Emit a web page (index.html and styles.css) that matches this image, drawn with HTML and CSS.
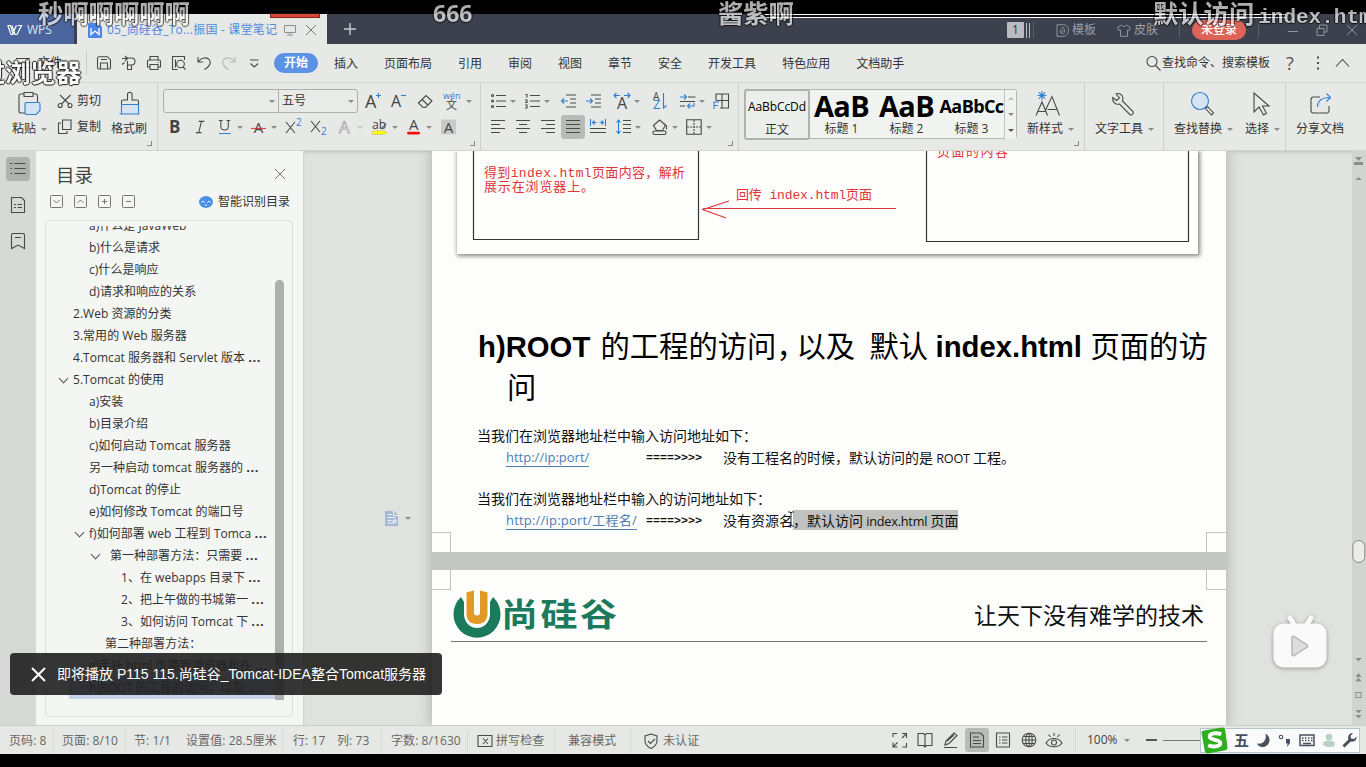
FILE: index.html
```html
<!DOCTYPE html>
<html lang="zh-CN">
<head>
<meta charset="utf-8">
<title>课堂笔记 - WPS</title>
<link rel="stylesheet" href="styles.css">
</head>
<body>
<div class="screen">
  <header class="titlebar">
    <div class="wps"><svg width="16" height="12" viewBox="0 0 16 12"><path d="M.5 1.500h3L6 9.500 9 2h1.500M5 1.500L8 10.500h2L14.500 1.500H11M.8 1.500L4 10.500h2L7.500 6" stroke="#fff" fill="none" stroke-width="1.200"/></svg><span>WPS</span></div>
    <div class="tab">
      <svg width="14" height="15" viewBox="0 0 14 15"><path d="M1 0h9l4 4v10a1 1 0 0 1-1 1H1a1 1 0 0 1-1-1V1a1 1 0 0 1 1-1z" fill="#4a86e8"/><path d="M3 5v6.500L7 8l4 3.500V5" stroke="#fff" fill="none" stroke-width="1.300"/></svg>
      <span class="tab-name">05_尚硅谷_To...振国 - 课堂笔记</span>
      <svg class="tab-mon" width="12" height="12" viewBox="0 0 12 12"><path d="M.5 1.500h11v7H.5zM6 8.500v2M3 11h6" stroke="#8b9095" fill="none"/></svg>
      <svg class="tab-x" width="12" height="12" viewBox="0 0 12 12"><path d="M1 1l10 10M11 1L1 11" stroke="#777" fill="none"/></svg>
    </div>
    <svg class="plus" width="12" height="12" viewBox="0 0 12 12"><path d="M6 0v12M0 6h12" stroke="#c8cbd2" stroke-width="1.400"/></svg>
    <div class="tb-right">
      <span class="badge">1</span>
      <i class="bars"></i>
      <i class="tsep"></i>
      <svg width="13" height="13" viewBox="0 0 13 13"><path d="M1 .7h6.500a5 5 0 0 1 5 5v1a5.500 5.500 0 0 1-5.500 5.600H1zM6.600 3c2 2 2.400 3.300 2 5-.5 2-3.700 2-4.200 0-.4-2 1.400-2.500 2.200-5zM5 9l2.500-3" stroke="#8f939d" fill="none"/></svg>
      <span>模板</span>
      <svg width="14" height="13" viewBox="0 0 14 13"><path d="M4.500 1L.7 3.500l1 3 1.800-.5v6.300h7V6l1.800.5 1-3L9.500 1C8.500 3 5.500 3 4.500 1z" stroke="#8f939d" fill="none"/></svg>
      <span>皮肤</span>
      <i class="tsep"></i>
      <b class="login">未登录</b>
      <i class="tsep"></i>
      <svg width="12" height="12" viewBox="0 0 12 12"><path d="M1 7.500h10" stroke="#8f939d"/></svg>
      <svg width="12" height="12" viewBox="0 0 12 12"><path d="M1 4.500h7v7H1zM3.500 4V1H11v7H8.500" stroke="#8f939d" fill="none"/></svg>
      <svg width="12" height="12" viewBox="0 0 12 12"><path d="M1 1l10 10M11 1L1 11" stroke="#8f939d"/></svg>
    </div>
  </header>

  <nav class="menu">
    <div class="file"><svg width="14" height="12" viewBox="0 0 14 12"><path d="M0 1.500h14M0 6h14M0 10.500h14" stroke="#444"/></svg><span>文件</span></div>
    <div class="quick ln">
      <svg viewBox="0 0 16 16"><path d="M1.500 3v9.500a1.500 1.500 0 0 0 1.500 1.500h10a1.500 1.500 0 0 0 1.500-1.500V5L11.500 1.700H3A1.500 1.500 0 0 0 1.500 3zM4.500 14V8h7v6M5 4.500h6"/></svg>
      <svg viewBox="0 0 16 16"><path d="M1 3.500h5M4 1l2.500 2.500L4 6M6 3h4.500a3.500 3.500 0 0 1 0 7H7M6.500 6v8.500h4V10M1 9.500l2.500-2"/></svg>
      <svg viewBox="0 0 16 16"><path d="M4 5V1.500h8V5M4 12H1.500V6.500a1.500 1.500 0 0 1 1.500-1.500h10a1.500 1.500 0 0 1 1.500 1.500V12H12M4 9.500h8v5H4zM11.500 7.500h1"/></svg>
      <svg viewBox="0 0 16 16"><path d="M6.500 14.500h-5v-13h12V5M4.500 4.500v8M14.500 14.500l-2.500-2.500"/><circle cx="9.500" cy="9" r="3.800"/></svg>
      <svg viewBox="0 0 16 16"><path d="M2 2v5h5M2.500 6.500C5 2.500 11 1.500 13.500 5c2 3.500-.5 7-5 9.500"/></svg>
      <svg class="dim" viewBox="0 0 16 16"><path d="M14 2v5H9M13.500 6.500C11 2.500 5 1.500 2.500 5c-2 3.500.5 7 5 9.500"/></svg>
      <svg viewBox="0 0 16 16"><path d="M4 5h8.500M4.500 8.500L8.200 12l3.800-3.500"/></svg>
    </div>
    <div class="tabs"><b>开始</b><span>插入</span><span>页面布局</span><span>引用</span><span>审阅</span><span>视图</span><span>章节</span><span>安全</span><span>开发工具</span><span>特色应用</span><span>文档助手</span></div>
    <div class="search ln">
      <svg viewBox="0 0 16 16"><circle cx="6" cy="6.500" r="5"/><path d="M9.500 10.500l5 5"/></svg>
      <span>查找命令、搜索模板</span>
      <em>?</em>
      <svg class="dots" viewBox="0 0 16 16"><path d="M7 2.500h2M7 8h2M7 13.500h2" stroke-width="2"/></svg>
      <svg viewBox="0 0 16 16"><path d="M2 11.500l6.500-7 6.500 7"/></svg>
    </div>
  </nav>

  <section class="ribbon ln">
    <div class="grp clip">
      <div class="big"><svg width="26" height="26" viewBox="0 0 26 26"><path d="M8 3H5a2 2 0 0 0-2 2v15a2 2 0 0 0 2 2h4M17 3h2.500a2 2 0 0 1 2 2v6M8 1.500h9v4H8z"/><path class="bl tint" d="M9 13a1.500 1.500 0 0 1 1.500-1.500h12a1.500 1.500 0 0 1 1.500 1.500v6.500L20 23.500h-9.500A1.500 1.500 0 0 1 9 22z"/></svg><span>粘贴<i class="car"></i></span></div>
      <div class="pair">
        <div><svg viewBox="0 0 16 16"><path d="M3 2l9 9M13.500 2l-9 9"/><circle cx="3.200" cy="12.500" r="2"/><circle cx="13" cy="12.500" r="2"/></svg>剪切</div>
        <div><svg viewBox="0 0 16 16"><path d="M5.500 1h8.500v9.500H5.500zM4 4H1.500v10.500H10V12"/></svg>复制</div>
      </div>
      <div class="big"><svg width="26" height="26" viewBox="0 0 26 26"><path d="M4.500 13v-2.500a1.500 1.500 0 0 1 1.500-1.500h4.500V3.500a2.300 2.300 0 0 1 4.600 0V9H20a1.500 1.500 0 0 1 1.500 1.500V13"/><path class="bl tint" d="M4.500 13.500h17v9.500h-17zM2.500 23h20"/></svg><span>格式刷</span></div>
      <i class="corner"></i>
    </div>

    <div class="grp font">
      <div class="row r1">
        <div class="combo"><i class="car"></i></div>
        <div class="combo sz">五号<i class="car"></i></div>
        <svg viewBox="0 0 16 16"><text x="0" y="15" class="t17">A</text><path class="bl" d="M11 2.500h5M13.500 0v5"/></svg>
        <svg viewBox="0 0 16 16"><text x="0" y="14" class="t15">A</text><path class="bl" d="M10 2.500h5"/></svg>
        <svg viewBox="0 0 16 16"><path d="M1.500 10l7.500-7.500L15 8l-6.500 6.500H6zM5 6.500l6 5.500"/></svg>
        <svg class="wide" viewBox="0 0 20 18"><text x="0" y="7" class="t9 fb">wén</text><text x="3" y="17" class="t11">文</text></svg>
        <i class="car"></i>
      </div>
      <div class="row r2">
        <svg viewBox="0 0 16 16"><text x="0" y="14" class="t17 bd">B</text></svg>
        <svg viewBox="0 0 16 16"><path d="M5 2h6M2 14h6M8 2L5 14"/></svg>
        <svg viewBox="0 0 16 16"><path d="M3 1v6.500c0 5 8 5 8 0V1M1 1h4M9 1h4"/><path class="bl" d="M1 15h12.500"/></svg>
        <i class="car"></i>
        <svg viewBox="0 0 16 16"><text x="3" y="14" class="t15">A</text><path class="rd" d="M0 9.500h16"/></svg>
        <i class="car"></i>
        <svg class="x2" viewBox="0 0 17 16"><path d="M1 3l9 11M10 3L1 14"/><text x="11" y="7" class="t10 fb">2</text></svg>
        <svg class="x2" viewBox="0 0 17 16"><path d="M1 2l9 11M10 2L1 13"/><text x="11" y="16" class="t10 fb">2</text></svg>
        <svg viewBox="0 0 16 16"><text x="1" y="14.500" class="t18 ol">A</text></svg>
        <i class="car pale"></i>
        <svg viewBox="0 0 16 16"><text x="0" y="10.500" class="t12">ab</text><path d="M10 10l5-5.500"/><rect x="0" y="12" width="15" height="4" rx="2" fill="#ff0" stroke="#aaa" stroke-width=".5"/></svg>
        <i class="car"></i>
        <svg viewBox="0 0 16 16"><text x="2" y="11" class="t15">A</text><rect x="0" y="13" width="14" height="3" rx="1.500" fill="#e11" stroke="none"/></svg>
        <i class="car"></i>
        <svg viewBox="0 0 16 16"><rect width="16" height="16" fill="#c9cbc9" stroke="none"/><text x="3" y="14" class="t15">A</text></svg>
      </div>
      <i class="corner"></i>
    </div>

    <div class="grp para">
      <div class="row p1">
        <svg viewBox="0 0 16 16"><path d="M5 2.500h10M5 8h10M5 13.500h10"/><circle cx="1.500" cy="2.500" r="1"/><circle cx="1.500" cy="8" r="1"/><circle cx="1.500" cy="13.500" r="1"/></svg>
        <i class="car"></i>
        <svg viewBox="0 0 16 16"><path d="M5 2.500h10M5 8h10M5 13.500h10M.5 1.500h1.500v3M0 7h2v2.500H0M0 12h2v3H0"/></svg>
        <i class="car"></i>
        <svg viewBox="0 0 16 16"><path d="M5 2h10M9 6h6M9 10h6M5 14h10"/><path class="bl" d="M7 8H.5M3 5.500L.5 8 3 10.500"/></svg>
        <svg viewBox="0 0 16 16"><path d="M5 2h10M9 6h6M9 10h6M5 14h10"/><path class="bl" d="M0 8h6.500M4 5.500L6.500 8 4 10.500"/></svg>
        <svg viewBox="0 0 16 16"><text x="3" y="16" class="t15">A</text><path class="bl" d="M0 2.500h6M2.500 0L0 2.500 2.500 5M10 2.500h6M13.500 0L16 2.500 13.500 5"/></svg>
        <i class="car"></i>
        <svg viewBox="0 0 16 16"><text x="1" y="7" class="t10">A</text><text x="1" y="16" class="t12 fb">Z</text><path class="bl" d="M11.500 0v15l3-2.500"/></svg>
        <svg viewBox="0 0 16 16"><path d="M8 4h7.500M0 8.500h15M0 13h5"/><path class="bl" d="M0 4h6M4 1.500L6.500 4 4 6.500M14 10v3H8M10 10.500L7.500 13l2.500 2.500"/></svg>
        <i class="car"></i>
        <svg viewBox="0 0 16 16"><path d="M3 7V1h12.500v14H7M3 7.500h12.500M9 1v14"/><path class="bl" d="M1 16V9h5M1 12.500h4"/></svg>
      </div>
      <div class="row p2">
        <svg viewBox="0 0 16 16"><path d="M0 1.500h14M0 5.500h9M0 9.500h14M0 13.500h9"/></svg>
        <svg viewBox="0 0 16 16"><path d="M0 1.500h14M3 5.500h8M0 9.500h14M3 13.500h8"/></svg>
        <svg viewBox="0 0 16 16"><path d="M0 1.500h14M5 5.500h9M0 9.500h14M5 13.500h9"/></svg>
        <div class="on"><svg viewBox="0 0 16 16"><path d="M1 1.500h14M1 5.500h14M1 9.500h14M1 13.500h14"/></svg></div>
        <svg viewBox="0 0 16 16"><path d="M0 9.500h16M0 13.500h16"/><path class="bl" d="M.5 0v7M15.500 0v7M2.500 3.500h4M4.500 1.500l-2 2 2 2M9.500 3.500h4M11.500 1.500l2 2-2 2"/></svg>
        <svg viewBox="0 0 16 16"><path d="M7 1.500h8M7 5.500h8M7 9.500h8M7 13.500h8"/><path class="bl" d="M2.500 1v13.500M.5 3.500l2-2.500 2 2.500M.5 12l2 2.500 2-2.500"/></svg>
        <i class="car"></i>
        <svg viewBox="0 0 16 16"><path d="M1.500 6.500l6-5.500 6 5-3 5.500h-6zM12 5l2.500 2v3.500"/><rect x="1" y="12" width="13" height="3.500" rx="1.500"/></svg>
        <i class="car"></i>
        <svg viewBox="0 0 16 16"><path d="M.7.700h14.500v14.500H.7z"/><path d="M8 1v14M1 8h14" stroke-dasharray="2 1"/></svg>
        <i class="car"></i>
      </div>
      <i class="corner"></i>
    </div>

    <div class="grp styles">
      <div class="gallery">
        <div class="st sel"><span class="s0">AaBbCcDd</span><span>正文</span></div>
        <div class="st"><span class="s1">AaB</span><span>标题 1</span></div>
        <div class="st"><span class="s1">AaB</span><span>标题 2</span></div>
        <div class="st"><span class="s3">AaBbCc</span><span>标题 3</span></div>
        <div class="gs"><i class="car up"></i><i class="car"></i><i class="car bar"></i></div>
      </div>
      <div class="big ns"><svg width="26" height="26" viewBox="0 0 26 26"><path d="M2 24.500L8 11l5.500 13.500M4 20.500h7.500M11.500 19L18 5.500l7.500 19M13.500 18.500h9.500"/><path class="bl" d="M8 0v9M3.500 4.500h9M4.800 1.300l6.400 6.400M11.200 1.300L4.800 7.700"/></svg><span>新样式<i class="car"></i></span></div>
      <i class="corner"></i>
    </div>
    <div class="grp tools"><div class="big"><svg width="26" height="26" viewBox="0 0 26 26"><path d="M6 3c3-1.500 7 .5 7 4.500l-.5 2.500L23 20.500a2.300 2.300 0 0 1-3 3.200L9.500 13C5.500 14 2 11 2.700 6.500L6.500 9.500 9.500 7z"/></svg><span>文字工具<i class="car"></i></span></div></div>
    <div class="grp find">
      <div class="big"><svg width="26" height="26" viewBox="0 0 26 26"><path d="M16.500 17.500l2-2 6 6.500-2 2z"/><circle class="bl tint" cx="11" cy="10" r="8.500"/></svg><span>查找替换<i class="car"></i></span></div>
      <div class="big sl"><svg width="26" height="26" viewBox="0 0 26 26"><path d="M6 2v19l5-5 4.500 8 3-1.800-4-7.200h6.500z"/></svg><span>选择<i class="car"></i></span></div>
    </div>
    <div class="grp share"><div class="big"><svg width="26" height="26" viewBox="0 0 26 26"><path d="M12 6H5.500A2.500 2.500 0 0 0 3 8.500v11A2.500 2.500 0 0 0 5.500 22h13a2.500 2.500 0 0 0 2.500-2.500V15"/><path class="bl" d="M9.500 16c0-6 4-9.500 12.500-9.500M18.500 2.500l4 4-4 4"/></svg><span>分享文档</span></div></div>
  </section>

  <main class="work">
    <aside class="rail ln">
      <div class="rb on"><svg viewBox="0 0 16 16"><path d="M4.500 2.500h11M4.500 7.500h11M4.500 12.500h11M0 2.500h2.500M.5 7.500H2M.5 12.500H2"/></svg></div>
      <div class="rb"><svg viewBox="0 0 16 16"><path d="M1.500.5h10l3 3v12h-13zM4 7.500h2M7.500 7.500H12M4 10.500h2M7.500 10.500H12"/></svg></div>
      <div class="rb"><svg viewBox="0 0 16 16"><path d="M1.500 2A1.500 1.500 0 0 1 3 .5h10A1.500 1.500 0 0 1 14.500 2v13.500L8 12l-6.500 3.500zM5 4.500h6"/></svg></div>
    </aside>
    <aside class="nav">
      <div class="nhead"><h2>目录</h2><svg width="12" height="12" viewBox="0 0 12 12"><path d="M1 1l10 10M11 1L1 11" stroke="#777"/></svg></div>
      <div class="ntools ln">
        <svg viewBox="0 0 14 14"><rect x=".5" y=".5" width="12" height="12" rx="1"/><path d="M3.500 5l3 3 3-3"/></svg>
        <svg viewBox="0 0 14 14"><rect x=".5" y=".5" width="12" height="12" rx="1"/><path d="M3.500 8l3-3 3 3"/></svg>
        <svg viewBox="0 0 14 14"><rect x=".5" y=".5" width="12" height="12" rx="1"/><path d="M4 6.500h5M6.500 4v5"/></svg>
        <svg viewBox="0 0 14 14"><rect x=".5" y=".5" width="12" height="12" rx="1"/><path d="M4 6.500h5"/></svg>
        <span class="smart"><svg viewBox="0 0 14 14"><ellipse cx="7" cy="7" rx="7" ry="6" fill="#4a90e8" stroke="none"/><path d="M2.500 7.500L4 6l1.500 1.500M8.500 7.500L10 6l1.500 1.500M6 10h2" stroke="#fff"/></svg>智能识别目录</span>
      </div>
      <div class="nbox">
        <ul class="toc">
          <li class="l2">a)什么是 JavaWeb</li>
          <li class="l2">b)什么是请求</li>
          <li class="l2">c)什么是响应</li>
          <li class="l2">d)请求和响应的关系</li>
          <li class="l1">2.Web 资源的分类</li>
          <li class="l1">3.常用的 Web 服务器</li>
          <li class="l1">4.Tomcat 服务器和 Servlet 版本 <b>...</b></li>
          <li class="l1 op">5.Tomcat 的使用</li>
          <li class="l2">a)安装</li>
          <li class="l2">b)目录介绍</li>
          <li class="l2">c)如何启动 Tomcat 服务器</li>
          <li class="l2">另一种启动 tomcat 服务器的 <b>...</b></li>
          <li class="l2">d)Tomcat 的停止</li>
          <li class="l2">e)如何修改 Tomcat 的端口号</li>
          <li class="l2 op">f)如何部署 web 工程到 Tomca <b>...</b></li>
          <li class="l3 op">第一种部署方法：只需要 <b>...</b></li>
          <li class="l4">1、在 webapps 目录下 <b>...</b></li>
          <li class="l4">2、把上午做的书城第一 <b>...</b></li>
          <li class="l4">3、如何访问 Tomcat 下 <b>...</b></li>
          <li class="l3b">第二种部署方法：</li>
          <li class="l2">g)手托 html 页面到浏览器和在 <b>...</b></li>
          <li class="l2 cur">h)ROOT 的工程的访问，以及&nbsp; <b>...</b></li>
        </ul>
        <i class="nthumb"></i>
      </div>
    </aside>

    <div class="canvas">
      <div class="margin-tool"><svg width="14" height="16" viewBox="0 0 14 16"><path d="M0 0h9l4 4v11H0z" fill="#a5b8d6"/><path d="M2.500 3.500h4M2.500 6.500h8M2.500 9.500h4M2.500 12h8M8.500 0v4.500H13M8 9v2h3V9z" stroke="#f0f3f8" fill="none"/></svg><i class="car"></i></div>
      <div class="pages">
        <article class="page one">
          <svg class="diagram" width="741" height="103" viewBox="0 0 741 103">
            <path d="M16.500-2v90.500h225V-2M469.500-2v92.500h262V-2" stroke="#333" fill="none" stroke-width="1.200"/>
            <path d="M439 57.500H246M272 50l-26 8.500L269 67" stroke="#d8383d" fill="none" stroke-width="1.200"/>
            <g class="kai">
              <text x="27" y="26" textLength="201">得到index.html页面内容，解析</text>
              <text x="27" y="40" textLength="110">展示在浏览器上。</text>
              <text x="279" y="48" textLength="136" xml:space="preserve">回传 index.html页面</text>
              <text x="480" y="5" textLength="71">页面的内容</text>
            </g>
          </svg>
          <h1><b>h)ROOT</b><span>的工程的访问</span><span>，</span><span>以及</span><span>默认</span><b>index.html</b><span>页面的访</span><span class="wrap">问</span></h1>
          <div class="para-txt">
            <p>当我们在浏览器地址栏中输入访问地址如下：</p>
            <p class="url"><a>http://ip:port/</a><code>====&gt;&gt;&gt;&gt;</code><span>没有工程名的时候，默认访问的是 <i>ROOT</i> 工程。</span></p>
            <p class="second">当我们在浏览器地址栏中输入的访问地址如下：</p>
            <p class="url"><a>http://ip:port/工程名/</a><code>====&gt;&gt;&gt;&gt;</code><span>没有资源名<mark>，默认访问 <i>index.html</i> 页面</mark></span></p>
          </div>
          <div class="crop bottom"><i></i><i></i></div>
        </article>
        <article class="page two">
          <div class="crop top"><i></i><i></i></div>
          <div class="lhead">
            <svg width="48" height="50" viewBox="0 0 48 50"><path d="M8 8a23.500 23.500 0 1 0 32 0l-3 5v12a13 14 0 0 1-26 0V13z" fill="#1b7a5c"/><path d="M13.500 3.500L21 1.500v22q0 3 3 3t3-3v-22l7.500 2V24q0 11-10.500 11T13.500 24z" fill="#e39a24"/></svg>
            <strong>尚硅谷</strong>
            <span>让天下没有难学的技术</span>
          </div>
        </article>
      </div>
      <svg class="tv" width="60" height="60" viewBox="0 0 60 60"><path d="M20 6l5 8M41 6l-5 8" stroke="#fafafa" stroke-width="5" stroke-linecap="round"/><rect x="3.500" y="11.500" width="53" height="44" rx="10" fill="#fafafa"/><path d="M22 25.500v17a1.500 1.500 0 0 0 2 1.200l13-8.500a1.500 1.500 0 0 0 0-2.400L24 24.300a1.500 1.500 0 0 0-2 1.200z" fill="#dcdedc" stroke="#b5b7b5" stroke-width="1.500"/></svg>
      <div class="vbar"><svg width="17" height="574" viewBox="0 0 17 574"><g fill="#8c8e8c"><path d="M3 6h7l-3.500 4zM2 11h9v3H2z"/><path d="M3.500 29h6l-3-3zM3.500 507h6l-3 3.500zM3.500 526h6l-3-4zM3.500 530.500h6l-3-4zM3.500 559h6l-3 3.500zM3.500 564h6l-3 3.500z"/></g><rect x="4" y="541.500" width="5" height="5" fill="none" stroke="#8c8e8c"/><rect x=".8" y="389.500" width="12" height="22" rx="6" fill="#ecedeb" stroke="#888"/></svg></div>
    </div>
  </main>

  <footer class="status ln">
    <div class="sleft"><span>页码: 8</span><i></i><span>页面: 8/10</span><i></i><span>节: 1/1</span><span>设置值: 28.5厘米</span><i></i><span>行: 17</span><span>列: 73</span><i></i><span>字数: 8/1630</span><i></i><span class="ic"><svg viewBox="0 0 16 16"><path d="M8 2.500H1v11h7M8 2.500h7v11H8M6 5.500l5 5.500M11 5.500L6 11"/></svg>拼写检查</span><i></i><span>兼容模式</span><i></i><span class="ic"><svg viewBox="0 0 16 16"><path d="M7 1l6 2v5c0 4-3 6-6 7.500C4 14 1 12 1 8V3zM4 8l2.500 2.500L11 6"/></svg>未认证</span></div>
    <div class="views">
      <svg viewBox="0 0 16 16"><path d="M1 5V1.500h4M10 1.500h4.500V6M1 10.500V15h4.500M10.500 15h4v-4M14.500 1.500L10 6M1 15l4.500-4.500"/></svg>
      <svg viewBox="0 0 16 16"><path d="M8 3L6.500 1.500H1v12h5.500L8 15l1.500-1.500H15v-12H9.500zM8 3v12"/></svg>
      <svg viewBox="0 0 16 16"><path d="M2 13l1-4 8-8 3 2.500-8 8zM1 15.500h13M4 9l7-6"/></svg>
      <div class="on"><svg viewBox="0 0 16 16"><path d="M1.500 1h10l3 3v11h-13zM4 5h6M4 8.500h8M4 11.500h8"/></svg></div>
      <svg viewBox="0 0 16 16"><path d="M1.500 1h13v14h-13zM4 5h1.500M7 5h5.500M4 8h1.500M7 8h5.500M4 11h1.500M7 11h5.500"/></svg>
      <svg viewBox="0 0 16 16"><circle cx="8" cy="8" r="6.800"/><ellipse cx="8" cy="8" rx="3.200" ry="6.800"/><path d="M1 8h14M2.500 4.500h11M2.500 11.500h11M8 1v14"/></svg>
      <svg viewBox="0 0 16 16"><path d="M0 11c3.500-6 12.500-6 16 0-3.500 5-12.500 5-16 0zM8 1v3M2.500 2.500l2 2.500M13.500 2.500l-2 2.500"/><circle cx="8" cy="10.500" r="2.500"/></svg>
      <i class="ssep"></i><span>100%</span><i class="car"></i><i class="minus"></i><i class="track"></i>
    </div>
    <div class="ime">
      <svg class="sg" width="28" height="28" viewBox="0 0 28 28"><path d="M3 3.500L22 .5q2.500 0 3 2L27.500 21q0 2.500-2 3.200L7 27.500q-2 0-3-2L.5 6q0-2 2.500-2.500z" fill="#2fae1e"/><path d="M21 7.500c-5-2-12-1-12 2.500 0 4 11 2.500 11 6.500 0 4-8 4.500-12.500 2.500" stroke="#fff" stroke-width="4" fill="none"/></svg>
      <b>五</b>
      <svg viewBox="0 0 16 16"><path d="M9.500 1.500C17 6 13 15 6.500 15 3.500 15 1.500 13 1 11.500 7 12.500 11 8 9.500 1.500z" class="sol"/></svg>
      <svg viewBox="0 0 16 16"><circle cx="4" cy="5" r="1.700"/><path d="M9 7h4v4l-2.500 3.500-.5-.5.8-2.500H9z" class="sol"/></svg>
      <svg viewBox="0 0 16 16"><path d="M1 3h14v10.500H1zM3 6h1.500M6 6h1.500M9 6h1.500M12 6h1.500M3 8.500h1.500M6 8.500h1.500M9 8.500h1.500M12 8.500h1.500M4 11.500h8" stroke-width="1.500"/></svg>
      <svg viewBox="0 0 16 16"><circle cx="8" cy="5" r="3.300" fill="#b9cfc8" stroke="none"/><path d="M2 12q0-3.500 6-3.500t6 3.500-6 3-6-3z" fill="#b9cfc8" stroke="none"/></svg>
      <svg viewBox="0 0 16 16"><path d="M1.500 14.500L8 8" stroke-width="3"/><path d="M14.500 4.500L12 7l-3-.5L8.500 4 11 1C7 1 5.500 4 6.500 7.500 8 11 15 10.500 14.500 4.500z" class="sol"/></svg>
    </div>
  </footer>

  <i class="redmark"></i>
  <i class="wline"></i>
  <svg class="ibeam" width="8" height="16" viewBox="0 0 8 16"><path d="M1 1h2l1 1 1-1h2M4 2v12M1 15h2l1-1 1 1h2" stroke="#222" fill="none"/></svg>
  <div class="toast"><svg width="15" height="15" viewBox="0 0 15 15"><path d="M1 1l13 13M14 1L1 14" stroke="#fff" stroke-width="2"/></svg><span>即将播放 P115 115.尚硅谷_Tomcat-IDEA整合Tomcat服务器</span></div>
  <div class="dm d1">秒啊啊啊啊啊</div>
  <div class="dm d2">666</div>
  <div class="dm d3">酱紫啊</div>
  <div class="dm d4">默认访问<span>index.html</span></div>
  <div class="dm d5">过浏览器</div>
</div>
</body>
</html>
```
FILE: styles.css
```css
* { box-sizing: border-box; margin: 0; padding: 0; }
body { background: #000; font: 12px/16px "Open Sans", "Noto Sans CJK SC", sans-serif; color: #333; overflow: hidden; }
i { font-style: normal; }
svg { display: block; flex: none; overflow: visible; }
.screen { position: relative; width: 1366px; height: 767px; padding-top: 14px; display: flex; flex-direction: column; overflow: hidden; white-space: nowrap; }
.ln svg { width: 16px; height: 16px; fill: none; stroke: #484a4a; stroke-width: 1.1; }
.ln svg text { fill: #444; stroke: none; }
.ln svg .bl { stroke: #2f7fd0; }
.ln svg .tint { fill: #d5e3f3; }
.ln svg .rd { stroke: #d33; }
.ln svg text.fb { fill: #2f7fd0; }
.t9 { font-size: 9px; } .t10 { font-size: 10px; } .t11 { font-size: 11px; } .t12 { font-size: 13px; }
.t15 { font-size: 16px; } .t17 { font-size: 18px; } .t18 { font-size: 18px; }
.bd { font-weight: 700; }
.ln svg text.ol { fill: #eee; stroke: #aaa; stroke-width: .8; }
.car { display: block; width: 0; height: 0; border: 3px solid transparent; border-top: 3px solid #8a8c8a; border-bottom: 0; }
.car.pale { border-top-color: #c4c6c4; }

/* title bar */
.titlebar { height: 30px; background: #3d414d; display: flex; align-items: center; color: #9a9ea8; }
.wps { width: 74px; height: 30px; background: #4a659d; color: #dfe5ef; display: flex; align-items: center; padding: 1px 0 0 7px; gap: 4px; }
.tab { width: 250px; height: 30px; margin-left: 3px; background: #e7e9e6; display: flex; align-items: center; padding: 2px 0 0 11px; color: #5088e0; }
.tab-name { width: 182px; padding-left: 5px; letter-spacing: .22px; }
.tab-mon { margin-left: 0; }
.tab-x { margin-left: 9px; }
.plus { margin-left: 17px; }
.tb-right { margin-left: auto; padding-top: 2px; display: grid; align-items: center; grid-template-columns: 19px 7px 23px 16px 45px 17px 45px 13px 66px 29px 29px 30px 20px; }
.badge { background: #b9bcc1; color: #333; width: 17px; height: 16px; text-align: center; border-radius: 1px; }
.bars { width: 4px; height: 15px; border: solid #b9bcc1; border-width: 0 1px; }
.tsep { width: 1px; height: 16px; background: #5a5e69; }
.login { width: 54px; height: 20px; border-radius: 10px; background: #dd6257; color: #fff; font-weight: 500; text-align: center; line-height: 19px; }

/* menu */
.menu { height: 39px; background: #e7e9e6; border-bottom: 1px solid #d6d8d5; display: flex; align-items: center; }
.file { width: 87px; height: 24px; border-right: 1px solid #c9cbc8; display: flex; align-items: center; padding-left: 16px; gap: 8px; }
.quick { display: grid; grid-template-columns: repeat(7, 25px); padding-left: 9px; width: 187px; }
.ln .dim { stroke: #b5b7b5; }
.tabs { display: flex; gap: 26px; align-items: center; }
.tabs span { padding-top: 1px; }
.tabs b { width: 44px; height: 20px; border-radius: 10px; background: #5b92e5; color: #fff; text-align: center; line-height: 20px; margin-right: -10px; font-weight: 600; }
.search { margin-left: auto; display: grid; grid-template-columns: 16px 124px 24px 24px 32px; align-items: center; }
.search em { font: 18px/20px "Open Sans", sans-serif; color: #555; }

/* ribbon */
.ribbon { height: 68px; background: #e7e9e6; border-bottom: 1px solid #d2d4d1; display: flex; }
.grp { position: relative; border-right: 1px solid #cfd1ce; padding-top: 6px; }
.corner { position: absolute; right: 5px; bottom: 4px; width: 5px; height: 5px; border: solid #888; border-width: 0 1px 1px 0; }
.big { display: flex; flex-direction: column; }
.ln .big > svg { width: 26px; height: 26px; margin: 2px 0 4px 15px; }
.big > span { display: flex; align-items: center; gap: 5px; }
.row { display: grid; height: 24px; align-items: center; margin-bottom: 2px; }
.clip { width: 158px; display: flex; padding-left: 12px; }
.clip .big:first-child { width: 45px; }
.ln .clip .big:first-child > svg, .ribbon .clip .big:first-child > svg { margin-left: 4px; }
.ribbon .clip .big:nth-child(3) > svg { margin-left: 6px; }
.pair { width: 54px; }
.pair div { display: flex; align-items: center; height: 24px; margin-bottom: 2px; gap: 4px; }
.font { width: 323px; padding-left: 5px; }
.r1 { grid-template-columns: 115px 87px 26px 26px 26px 23px 8px; }
.combo { height: 24px; width: 116px; border: 1px solid #adafad; border-radius: 3px 0 0 3px; display: flex; align-items: center; justify-content: flex-end; padding: 0 3px; background: #e9ebe8; }
.combo.sz { width: 80px; border-radius: 0 3px 3px 0; justify-content: space-between; }
.ln .r1 .wide { width: 20px; height: 18px; }
.r2 { padding-left: 6px; grid-template-columns: 25px 24px 19px 14px 20px 14px 25px 28px 19px 15px 20px 15px 19px 15px 16px; }
.ln .r2 svg { width: 15px; }
.ln .r2 .x2 { width: 17px; }
.para { width: 258px; padding-left: 10px; }
.p1 { grid-template-columns: 19px 15px 19px 17px 25px 28px 20px 18px 28px 19px 14px 16px; }
.p2 { grid-template-columns: 25px 25px 20px 29px 26px 19px 17px 20px 14px 20px 8px; }
.p2 .on { width: 24px; height: 24px; background: #b9bbb9; border-radius: 3px; display: grid; place-items: center; }
.styles { width: 346px; padding-left: 5px; display: flex; }
.gallery { width: 273px; height: 50px; border: 1px solid #b5b7b5; border-radius: 3px; background: #f1f3f0; display: grid; grid-template-columns: 64px 65px 65px 65px 12px; }
.st { display: flex; flex-direction: column; align-items: center; }
.st span:first-child { height: 31px; line-height: 32px; color: #000; }
.st.sel { border: 2px solid #b0b2b0; margin: -1px; border-radius: 3px; background: #eceeeb; }
.s0 { font-size: 12px; letter-spacing: -.1px; }
.s1 { font: 700 29px/34px "Open Sans", sans-serif; letter-spacing: -.6px; }
.s3 { font: 700 18px/32px "Open Sans", sans-serif; letter-spacing: -.6px; }
.gs { border-left: 1px solid #c2c4c1; display: grid; place-items: center; background: #f1f3f0; }
.gs .up { transform: rotate(180deg); opacity: .5; }
.gs .bar { border-top-color: #555; box-shadow: 0 -5px 0 -3px #555; }
.ns { margin-left: 10px; }
.ribbon .ns > svg { margin-left: 7px; }
.tools { width: 79px; padding-left: 10px; }
.find { width: 122px; padding-left: 10px; display: flex; }
.sl { margin-left: 12px; }
.ribbon .sl > svg { margin-left: 3px; }
.share { border: 0; padding-left: 10px; }
.ribbon .share .big > svg { margin-left: 12px; }

/* workspace */
.work { height: 574px; display: flex; }
.rail { width: 36px; background: #d7d9d6; padding: 6px; display: flex; flex-direction: column; gap: 12px; }
.rb { width: 24px; height: 24px; border-radius: 4px; display: grid; place-items: center; }
.rb.on { background: #afb1af; }
.nav { width: 268px; background: #f4f6f3; border-right: 1px solid #d2d4d1; padding: 12px 10px 0 9px; }
.nhead { height: 22px; padding: 0 7px 0 11px; display: flex; justify-content: space-between; align-items: center; }
.nhead h2 { font: 400 18.5px/22px "Noto Sans CJK SC", sans-serif; color: #444; }
.ntools { display: grid; grid-template-columns: 24px 24px 24px 77px auto; padding: 0 0 0 5px; height: 34px; align-items: center; }
.ln.ntools svg { width: 14px; height: 14px; stroke: #777; stroke-width: 1; }
.smart { display: flex; gap: 5px; align-items: center; }
.nbox { position: relative; height: 497px; margin-top: 1px; border: 1px solid #dcdedb; border-radius: 4px; padding: 5px 0; display: flex; overflow: hidden; }
.toc { list-style: none; width: 229px; height: 480px; overflow: hidden; }
.toc li { line-height: 22px; height: 22px; position: relative; letter-spacing: .03px; }
.toc li:first-child { margin-top: -11px; }
.toc b { font-weight: 700; letter-spacing: .6px; font-size: 13px; line-height: 12px; }
.l1 { padding-left: 27px; } .l2 { padding-left: 43px; } .l3 { padding-left: 64px; } .l3b { padding-left: 59px; } .l4 { padding-left: 75px; }
.op::before { content: ""; position: absolute; top: 6px; width: 6px; height: 6px; border: solid #555; border-width: 0 1px 1px 0; transform: rotate(45deg); }
.l1.op::before { left: 14px; } .l2.op::before { left: 30px; } .l3.op::before { left: 46px; }
.toc .cur { margin-left: 23px; padding-left: 20px; background: #c6d5ec; }
.nthumb { width: 9px; height: 420px; margin-top: 54px; background: #aeb0ae; border-radius: 5px 5px 0 0; }

.canvas { position: relative; flex: 1; background: #e0e2df; display: flex; box-shadow: inset 0 3px 4px -3px #aaa; }
.margin-tool { width: 128px; padding: 360px 0 0 81px; display: flex; gap: 6px; }
.margin-tool .car { margin-top: 6px; }
.pages { width: 794px; background: #c4c6c3; box-shadow: 0 0 12px 2px #b5b7b4; clip-path: inset(0 -16px); display: flex; flex-direction: column; gap: 18px; }
.page { background: #fdfefc; position: relative; }
.one { height: 401px; }
.two { height: 155px; padding: 20px 19px; }
.diagram { margin-left: 25px; background: #fefefd; box-shadow: 1px 1px 4px 1px #888; overflow: hidden; }
.kai { font: 13px "Liberation Mono", "Noto Sans CJK SC", monospace; fill: #e0343a; }
h1 { display: grid; grid-template-columns: 122.5px 176px 20px 73px 66px 155px 118px; padding: 72px 0 0 46px; font: 29.3px/41px "Liberation Sans", "Noto Sans CJK SC", sans-serif; color: #000; }
h1 .wrap { grid-column: 1; padding-left: 29px; }
.para-txt { padding: 17px 0 0 45px; font: 14px/21px "Noto Sans CJK SC", sans-serif; color: #111; }
.para-txt .url { display: grid; grid-template-columns: 140px 77px auto; padding-left: 29px; align-items: center; height: 21px; }
.para-txt .second { margin-top: 21px; }
.para-txt a { font: 13px/17px "Open Sans", "Noto Sans CJK SC", sans-serif; color: #4f7cb5; border-bottom: 1px solid #4f7cb5; justify-self: start; padding-top: 1px; }
.para-txt .second + .url a { letter-spacing: .2px; }
.para-txt code { font: 700 11.7px/21px "Liberation Mono", monospace; padding-top: 2px; }
.para-txt i { font: 12.7px "Open Sans", sans-serif; letter-spacing: -.2px; }
mark { background: #c0c2c0; color: #111; }
.crop { position: absolute; left: 0; right: 0; display: flex; justify-content: space-between; }
.crop i { width: 19px; height: 20px; border: 0 solid #c2c4c2; }
.crop.bottom { bottom: 0; } .crop.top { top: 0; }
.crop.bottom i { border-top-width: 1px; } .crop.top i { border-bottom-width: 1px; }
.crop i:first-child { border-right-width: 1px; } .crop i:last-child { border-left-width: 1px; width: 20px; }
.lhead { height: 52px; border-bottom: 1px solid #777; display: flex; align-items: center; padding: 0 3px 4px 2px; }
.lhead strong { font: 700 37px/40px "Noto Sans CJK SC", sans-serif; letter-spacing: 2.5px; color: #1b7a5c; transform: scaleY(.85) translateY(-2px); }
.lhead span { margin-left: auto; font: 23px/30px "Noto Sans CJK SC", sans-serif; color: #111; }
.tv { position: absolute; left: 966px; top: 461px; filter: drop-shadow(0 1px 2px rgba(0,0,0,.35)); }
.vbar { margin-left: auto; width: 14px; background: #d2d4d1; overflow: hidden; }

/* status bar */
.status { height: 29px; background: #e6e8e5; border-top: 1px solid #cccecb; display: flex; align-items: center; color: #666; }
.sleft { display: grid; align-items: center; padding: 2px 0 0 9px; letter-spacing: .08px; grid-template-columns: 44px 9px 63px 9px 52px 96px 11px 44px 44px 10px 76px 10px 77px 14px 62px 14px 60px; }
.sleft i, .ssep { width: 1px; height: 24px; background: #d8dad7; }
.ic { display: flex; gap: 3px; align-items: center; }
.views { margin-left: auto; display: grid; align-items: center; grid-template-columns: 25px 26px 22px 30px 26px 25px 29px 12px 37px 22px 17px 37px; color: #444; }
.views .on { width: 24px; height: 24px; background: #b9bbb8; border-radius: 3px; display: grid; place-items: center; }
.minus { width: 11px; height: 2px; background: #555; }
.track { height: 1px; background: #777; }
.ime { width: 160px; height: 25px; background: #fafcfb; border: 1px solid #b8c2cc; margin-right: 6px; display: grid; grid-template-columns: 33px 22px 21px 22px 22px 21px 16px; grid-template-rows: 23px; align-items: center; }
.ln .ime svg { stroke: #4a4e60; }
.ime .sol { fill: #4a4e60; stroke: none; }
.ln .ime .sg { width: 27px; height: 27px; stroke: none; }
.ime b { font: 700 15px/20px "Noto Sans CJK SC", sans-serif; color: #4a4e60; }

/* overlays */
.redmark { position: absolute; left: 270px; top: 13px; width: 50px; height: 5px; background: #d9473a; border: 1px solid #8b2018; border-top: 1px solid #111; }
.wline { position: absolute; left: 765px; top: 14px; width: 521px; height: 4px; border: solid #fff; border-width: 1px 0; background: #112; }
.ibeam { position: absolute; left: 787px; top: 511px; }
.toast { position: absolute; left: 10px; top: 653px; width: 432px; height: 42px; border-radius: 4px; background: rgba(33,33,33,.91); color: #fff; display: flex; align-items: center; padding-left: 21px; gap: 11px; font: 14px/20px "Liberation Sans", "Noto Sans CJK SC", sans-serif; }
.dm { position: absolute; font: 700 25.3px/30px "Noto Sans CJK SC", sans-serif; color: #fff; opacity: .68; text-shadow: 1px 0 1px #000, -1px 0 1px #000, 0 1px 1px #000, 0 -1px 1px #000; }
.d1 { left: 38px; top: -3px; }
.d2 { left: 433px; top: -2px; font: 700 23px/30px "Noto Sans", sans-serif; }
.d3 { left: 718px; top: -3px; }
.d4 { left: 1153px; top: -3px; }
.d4 span { font: 700 21px/30px "Liberation Mono", monospace; margin-left: 4px; }
.d5 { left: -20px; top: 56px; opacity: .85; }
```
